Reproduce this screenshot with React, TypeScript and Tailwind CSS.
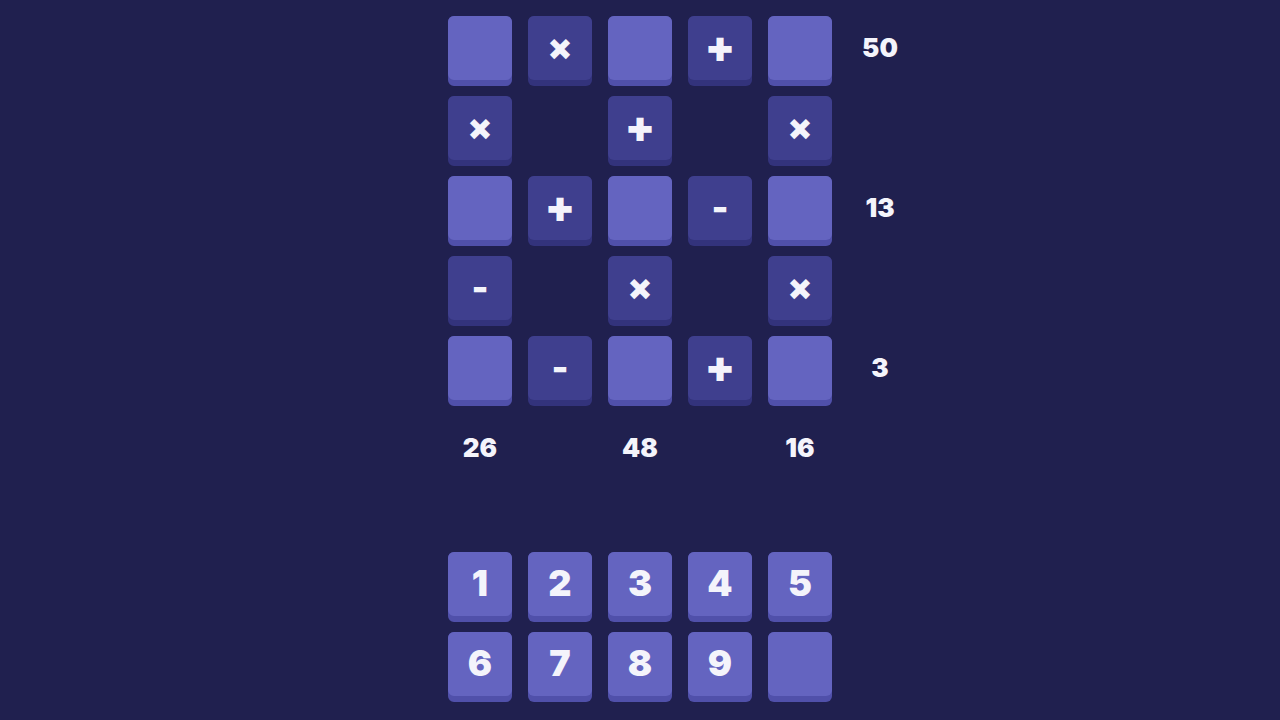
import React from 'react';

type Cell = { kind: 'num' | 'op' | 'empty' | 'label'; text?: string };

const n: Cell = { kind: 'num' };
const e: Cell = { kind: 'empty' };
const op = (text: string): Cell => ({ kind: 'op', text });
const lbl = (text: string): Cell => ({ kind: 'label', text });

const board: Cell[][] = [
  [n, op('×'), n, op('+'), n, lbl('50')],
  [op('×'), e, op('+'), e, op('×'), e],
  [n, op('+'), n, op('-'), n, lbl('13')],
  [op('-'), e, op('×'), e, op('×'), e],
  [n, op('-'), n, op('+'), n, lbl('3')],
  [lbl('26'), e, lbl('48'), e, lbl('16'), e],
];

const pad = ['1', '2', '3', '4', '5', '6', '7', '8', '9', ''];

const font = { fontFamily: 'Inter, "Noto Sans", sans-serif' };

const opSize: Record<string, string> = {
  '×': 'text-[36px] -mt-[2px]',
  '+': 'text-[44px] -mt-[4px]',
  '-': 'text-[36px] -mt-[3px]',
};

function Tile({ dark, children }: { dark?: boolean; children?: React.ReactNode }) {
  return (
    <div className={`w-16 h-[70px] rounded-[6px] ${dark ? 'bg-[#33337c]' : 'bg-[#5050aa]'}`}>
      <div
        className={`w-16 h-16 rounded-[6px] flex items-center justify-center text-[#f4f4fb] font-black leading-none ${
          dark ? 'bg-[#3f3f8e]' : 'bg-[#6464c0]'
        }`}
      >
        {children}
      </div>
    </div>
  );
}

export default function App() {
  return (
    <div className="min-h-[720px] w-full bg-[#20204f] overflow-hidden" style={font}>
      <div className="ml-[calc(50%-192px)] w-[464px] pt-4">
        <div className="grid grid-cols-[repeat(6,64px)] gap-x-4 gap-y-[10px] auto-rows-[70px]">
          {board.flat().map((c, i) => {
            if (c.kind === 'num') return <Tile key={i} />;
            if (c.kind === 'op')
              return (
                <Tile key={i} dark>
                  <span className={opSize[c.text ?? '+']}>{c.text}</span>
                </Tile>
              );
            if (c.kind === 'label')
              return (
                <div key={i} className="h-[62px] flex items-center justify-center text-[26px] font-black text-[#f4f4fb]">
                  {c.text}
                </div>
              );
            return <div key={i} />;
          })}
        </div>
        <div className="mt-[66px] grid grid-cols-[repeat(5,64px)] gap-x-4 gap-y-[10px]">
          {pad.map((d, i) => (
            <Tile key={i}>
              <span className="text-[36px] font-black -mt-[3px]">{d}</span>
            </Tile>
          ))}
        </div>
      </div>
    </div>
  );
}
